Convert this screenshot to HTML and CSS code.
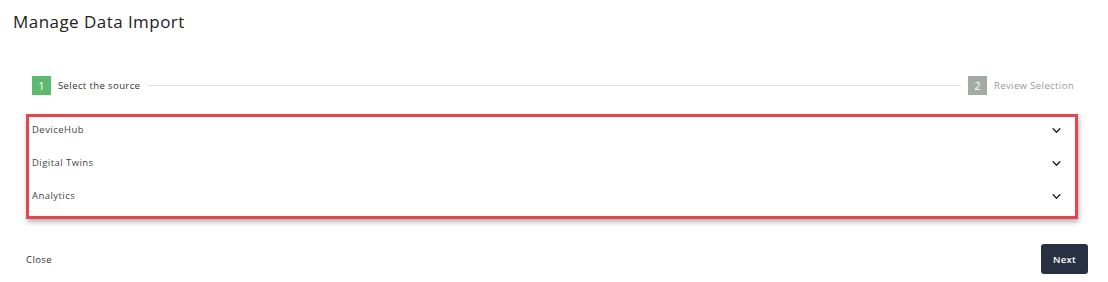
FILE: index.html
```html
<!DOCTYPE html>
<html lang="en">
<head>
  <meta charset="UTF-8" />
  <meta name="viewport" content="width=device-width, initial-scale=1.0"/>
  <title>Manage Data Import</title>
  <link rel="stylesheet" href="styles.css">
</head>
<body>
<div class="dialog">
  <h1 class="title">Manage Data Import</h1>

  <div class="stepper">
    <div class="step active">
      <span class="step-num">1</span>
      <span class="step-label">Select the source</span>
    </div>
    <div class="step-line"></div>
    <div class="step">
      <span class="step-num">2</span>
      <span class="step-label">Review Selection</span>
    </div>
  </div>

  <div class="sources">
    <div class="source-row">
      <span>DeviceHub</span>
      <svg class="chevron" viewBox="0 0 10 6" width="9" height="5"><path d="M1 1l4 4 4-4" fill="none" stroke="#222" stroke-width="1.7" stroke-linecap="round" stroke-linejoin="round"/></svg>
    </div>
    <div class="source-row">
      <span>Digital Twins</span>
      <svg class="chevron" viewBox="0 0 10 6" width="9" height="5"><path d="M1 1l4 4 4-4" fill="none" stroke="#222" stroke-width="1.7" stroke-linecap="round" stroke-linejoin="round"/></svg>
    </div>
    <div class="source-row">
      <span>Analytics</span>
      <svg class="chevron" viewBox="0 0 10 6" width="9" height="5"><path d="M1 1l4 4 4-4" fill="none" stroke="#222" stroke-width="1.7" stroke-linecap="round" stroke-linejoin="round"/></svg>
    </div>
  </div>

  <div class="footer">
    <button class="link-btn">Close</button>
    <button class="btn">Next</button>
  </div>
</div>
</body>
</html>
```

FILE: styles.css
```css
body {
  margin: 0;
  font-family: 'Open Sans', 'DejaVu Sans', sans-serif;
  background: #fff;
  color: #333;
}
.dialog {
  padding: 11px 0 0 0;
}
.title {
  margin: 0 0 0 13px;
  font-size: 17px;
  font-weight: 500;
  letter-spacing: 0.45px;
  color: #222;
  line-height: 22px;
}
.stepper {
  display: flex;
  align-items: center;
  margin: 43px 34px 0 32px;
  height: 19px;
}
.step {
  display: flex;
  align-items: center;
  gap: 7px;
}
.step-num {
  width: 19px;
  height: 19px;
  background: #a4aba4;
  color: #fff;
  font-size: 11px;
  display: flex;
  align-items: center;
  justify-content: center;
}
.step.active .step-num {
  background: #5dba6f;
}
.step-label {
  font-size: 9.5px;
  letter-spacing: 0.4px;
  color: #999;
}
.step.active .step-label {
  color: #333;
  font-weight: 500;
}
.step-line {
  flex: 1;
  height: 1px;
  background: #e2e2e2;
  margin: 0 7px 0 8px;
}
.sources {
  margin: 19px 30px 0 26px;
  border: 3px solid #e2474d;
  box-shadow: 1px 3px 5px rgba(0,0,0,0.3);
}
.source-row {
  height: 33px;
  box-sizing: border-box;
  padding: 6px 14px 0 3px;
  display: flex;
  justify-content: space-between;
  align-items: flex-start;
  font-size: 9.5px;
  letter-spacing: 0.45px;
  line-height: 14px;
  color: #444;
}
.chevron {
  margin-top: 5px;
}
.footer {
  display: flex;
  justify-content: space-between;
  align-items: center;
  margin: 25px 20px 0 26px;
}
.link-btn {
  background: none;
  border: none;
  padding: 0;
  font-family: inherit;
  font-size: 9.5px;
  letter-spacing: 0.4px;
  color: #333;
  cursor: pointer;
}
.btn {
  width: 47px;
  height: 30px;
  background: #283142;
  color: #fff;
  border: none;
  border-radius: 3px;
  font-family: inherit;
  font-size: 9.5px;
  font-weight: 600;
  letter-spacing: 0.3px;
  cursor: pointer;
}
```
